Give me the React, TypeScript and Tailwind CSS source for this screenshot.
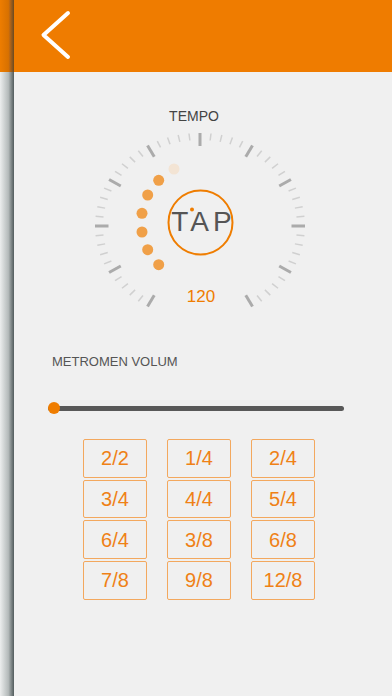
import React from 'react';

const signatures = ['2/2', '1/4', '2/4', '3/4', '4/4', '5/4', '6/4', '3/8', '6/8', '7/8', '9/8', '12/8'];

// dial centre inside the svg box
const CX = 115;
const CY = 102;

const ticks = Array.from({ length: 51 }, (_, i) => -150 + i * 6);

const dots: [number, number, string][] = [
  [174, 169, '#f3e4d4'],
  [158.7, 180.3, '#f0a048'],
  [147.7, 195, '#f0a048'],
  [142, 213.3, '#f0a048'],
  [142, 232, '#f0a048'],
  [147.7, 249.7, '#f0a048'],
  [158.7, 264.7, '#f0a048'],
];

const Dial: React.FC = () => (
  <svg width={230} height={200} viewBox="0 0 230 200" className="block">
    {ticks.map(a => {
      const major = a % 30 === 0;
      const r = (a * Math.PI) / 180;
      const s = Math.sin(r);
      const c = Math.cos(r);
      const inX = major ? 91.5 : 97;
      const inY = major ? 80 : 86;
      return (
        <line
          key={a}
          x1={CX + s * 105}
          y1={CY - c * 93}
          x2={CX + s * inX}
          y2={CY - c * inY}
          stroke={major ? '#ababab' : '#d0d0d0'}
          strokeWidth={major ? 3 : 1.5}
        />
      );
    })}
    {dots.map(([x, y, col], i) => (
      <circle key={i} cx={x - 85} cy={y - 124} r={5.5} fill={col} />
    ))}
    <circle cx={200.5 - 85} cy={222.5 - 124} r={32} fill="none" stroke="#ef7d00" strokeWidth={2} />
    <circle cx={192 - 85} cy={209.5 - 124} r={2} fill="#ef7d00" />
  </svg>
);

export default function App() {
  return (
    <div className="w-[392px] h-[696px] flex overflow-hidden font-['Liberation_Sans',Arial,sans-serif]">
      <div className="w-[14px] flex flex-col shrink-0">
        <div className="h-[72px] bg-linear-to-r from-[#ee7d00] via-[#d87100] via-60% to-[#6a4a20]" />
        <div className="flex-1 bg-linear-to-r from-[#eceeee] via-[#b4baba] via-60% to-[#525c5d]" />
      </div>

      <div className="flex-1 bg-[#f0f0f0] flex flex-col">
        <div className="h-[72px] bg-[#ef7c00] shrink-0">
          <svg width={70} height={72} viewBox="0 0 70 72" className="block">
            <path d="M54 13 L29.5 35 L54 57" fill="none" stroke="#ffffff" strokeWidth={4} strokeLinecap="round" strokeLinejoin="round" />
          </svg>
        </div>

        <div className="mt-[36px] flex justify-center pr-[18px] text-[14px] leading-[16px] text-[#444444]">TEMPO</div>

        <div className="relative w-[230px] h-[200px] ml-[71px]">
          <Dial />
          <div className="absolute left-0 right-0 top-[84px] text-center pl-[7px] text-[28px] leading-[28px] tracking-[4px] text-[#555555]">
            TAP
          </div>
          <div className="absolute left-0 right-0 top-[163px] text-center pl-[2px] text-[17px] leading-[20px] text-[#ef7d00]">
            120
          </div>
        </div>

        <div className="mt-[30px] pl-[38px] text-[13px] leading-[16px] text-[#555555]">METROMEN VOLUM</div>

        <div className="mt-[32px] ml-[34px] w-[296px] h-[12px] relative flex items-center">
          <div className="w-full h-[5px] rounded-full bg-[#585858]" />
          <div className="absolute left-0 top-0 w-[12px] h-[12px] rounded-full bg-[#ef7d00]" />
        </div>

        <div className="mt-[25px] ml-[69px] grid grid-cols-[64px_64px_64px] gap-x-[20px] gap-y-[2.2px]">
          {signatures.map(s => (
            <div
              key={s}
              className="h-[38.5px] flex items-center justify-center border-[1.5px] border-[#f3a85e] rounded-[2px] text-[20px] text-[#ef8116]"
            >
              {s}
            </div>
          ))}
        </div>
      </div>
    </div>
  );
}
